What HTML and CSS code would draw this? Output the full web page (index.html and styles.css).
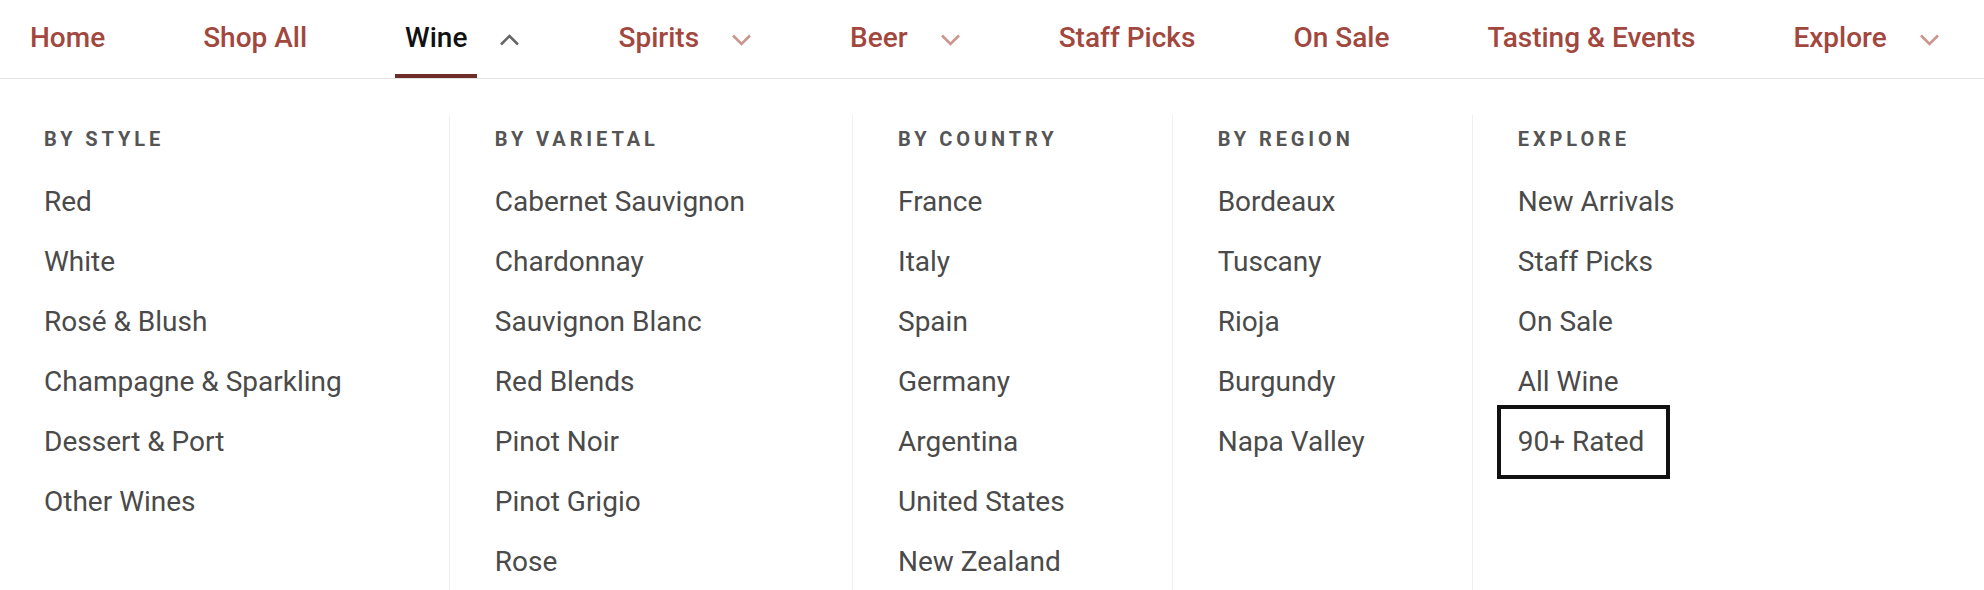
FILE: index.html
```html
<!DOCTYPE html>
<html lang="en">
<head>
<meta charset="utf-8">
<title>Wine menu</title>
<link rel="stylesheet" href="styles.css">
</head>
<body>
<header class="site-nav">
  <ul class="nav-list">
    <li class="nav-item"><a class="nav-link" href="#">Home</a></li>
    <li class="nav-item"><a class="nav-link" href="#">Shop All</a></li>
    <li class="nav-item">
      <a class="nav-link is-active" href="#">Wine</a>
      <button class="nav-toggle is-open" aria-label="Collapse Wine">
        <svg viewBox="0 0 21 12" width="21" height="12"><polyline points="2,10.5 10.5,2 19,10.5"/></svg>
      </button>
    </li>
    <li class="nav-item">
      <a class="nav-link" href="#">Spirits</a>
      <button class="nav-toggle" aria-label="Expand Spirits">
        <svg viewBox="0 0 21 12" width="21" height="12"><polyline points="2,1.5 10.5,10 19,1.5"/></svg>
      </button>
    </li>
    <li class="nav-item">
      <a class="nav-link" href="#">Beer</a>
      <button class="nav-toggle" aria-label="Expand Beer">
        <svg viewBox="0 0 21 12" width="21" height="12"><polyline points="2,1.5 10.5,10 19,1.5"/></svg>
      </button>
    </li>
    <li class="nav-item"><a class="nav-link" href="#">Staff Picks</a></li>
    <li class="nav-item"><a class="nav-link" href="#">On Sale</a></li>
    <li class="nav-item"><a class="nav-link" href="#">Tasting &amp; Events</a></li>
    <li class="nav-item">
      <a class="nav-link" href="#">Explore</a>
      <button class="nav-toggle" aria-label="Expand Explore">
        <svg viewBox="0 0 21 12" width="21" height="12"><polyline points="2,1.5 10.5,10 19,1.5"/></svg>
      </button>
    </li>
  </ul>
</header>

<section class="mega-menu">
  <div class="menu-col">
    <h3 class="menu-heading">By Style</h3>
    <ul class="menu-list">
      <li><a class="menu-link" href="#">Red</a></li>
      <li><a class="menu-link" href="#">White</a></li>
      <li><a class="menu-link" href="#">Rosé &amp; Blush</a></li>
      <li><a class="menu-link" href="#">Champagne &amp; Sparkling</a></li>
      <li><a class="menu-link" href="#">Dessert &amp; Port</a></li>
      <li><a class="menu-link" href="#">Other Wines</a></li>
    </ul>
  </div>
  <div class="menu-col">
    <h3 class="menu-heading">By Varietal</h3>
    <ul class="menu-list">
      <li><a class="menu-link" href="#">Cabernet Sauvignon</a></li>
      <li><a class="menu-link" href="#">Chardonnay</a></li>
      <li><a class="menu-link" href="#">Sauvignon Blanc</a></li>
      <li><a class="menu-link" href="#">Red Blends</a></li>
      <li><a class="menu-link" href="#">Pinot Noir</a></li>
      <li><a class="menu-link" href="#">Pinot Grigio</a></li>
      <li><a class="menu-link" href="#">Rose</a></li>
    </ul>
  </div>
  <div class="menu-col">
    <h3 class="menu-heading">By Country</h3>
    <ul class="menu-list">
      <li><a class="menu-link" href="#">France</a></li>
      <li><a class="menu-link" href="#">Italy</a></li>
      <li><a class="menu-link" href="#">Spain</a></li>
      <li><a class="menu-link" href="#">Germany</a></li>
      <li><a class="menu-link" href="#">Argentina</a></li>
      <li><a class="menu-link" href="#">United States</a></li>
      <li><a class="menu-link" href="#">New Zealand</a></li>
    </ul>
  </div>
  <div class="menu-col">
    <h3 class="menu-heading">By Region</h3>
    <ul class="menu-list">
      <li><a class="menu-link" href="#">Bordeaux</a></li>
      <li><a class="menu-link" href="#">Tuscany</a></li>
      <li><a class="menu-link" href="#">Rioja</a></li>
      <li><a class="menu-link" href="#">Burgundy</a></li>
      <li><a class="menu-link" href="#">Napa Valley</a></li>
    </ul>
  </div>
  <div class="menu-col">
    <h3 class="menu-heading">Explore</h3>
    <ul class="menu-list">
      <li><a class="menu-link" href="#">New Arrivals</a></li>
      <li><a class="menu-link" href="#">Staff Picks</a></li>
      <li><a class="menu-link" href="#">On Sale</a></li>
      <li><a class="menu-link" href="#">All Wine</a></li>
      <li><a class="menu-link is-focused" href="#">90+ Rated</a></li>
    </ul>
  </div>
</section>
</body>
</html>
```

FILE: styles.css
```css
* { box-sizing: border-box; }

html, body {
  margin: 0;
  padding: 0;
  background: #ffffff;
  height: 100%;
  overflow: hidden;
}

body {
  font-family: Roboto, "Liberation Sans", Arial, sans-serif;
  color: #4a4a4a;
}

a { text-decoration: none; color: inherit; }

ul { list-style: none; margin: 0; padding: 0; }

/* ---------- top navigation ---------- */
.site-nav {
  height: 79px;
  border-bottom: 1px solid #e3e3e3;
  padding-left: 20px;
}

.nav-list {
  display: flex;
  align-items: stretch;
  height: 78px;
  gap: 78px;
}

.nav-item {
  display: flex;
  align-items: center;
}

.nav-link {
  height: 78px;
  display: flex;
  align-items: center;
  padding: 0 10px 3px;
  font-size: 28px;
  font-weight: 500;
  color: #a2473e;
  white-space: nowrap;
}

.nav-link.is-active {
  color: #111111;
  box-shadow: inset 0 -4px 0 #6d2e2a;
}

.nav-toggle {
  display: flex;
  align-items: center;
  justify-content: center;
  border: 0;
  background: none;
  padding: 0;
  margin: 2px 10px 0 22px;
  width: 21px;
  height: 12px;
  cursor: pointer;
}

.nav-toggle svg {
  display: block;
  fill: none;
  stroke: #cc958e;
  stroke-width: 2.6;
}

.nav-toggle.is-open svg {
  stroke: #666666;
}

/* ---------- mega menu ---------- */
.mega-menu {
  display: flex;
  align-items: stretch;
  padding-top: 36px;
  height: calc(100% - 79px);
}

.menu-col {
  padding: 12px 107px 0 45px;
  border-left: 1px solid #f0f0f0;
}

.menu-col:first-child {
  border-left: 0;
  padding-left: 44px;
}

.menu-heading {
  margin: 0 0 21px;
  font-size: 20px;
  line-height: 24px;
  font-weight: 700;
  letter-spacing: 3.9px;
  text-transform: uppercase;
  color: #555555;
  white-space: nowrap;
}

.menu-list li {
  height: 60px;
  line-height: 60px;
}

.menu-link {
  display: inline-block;
  font-size: 28px;
  line-height: 60px;
  color: #4a4a4a;
  white-space: nowrap;
}

.menu-link.is-focused {
  line-height: 66px;
  margin: -3px -22px -3px -17px;
  padding: 0 22px 0 17px;
  outline: 4px solid #111111;
}
```
